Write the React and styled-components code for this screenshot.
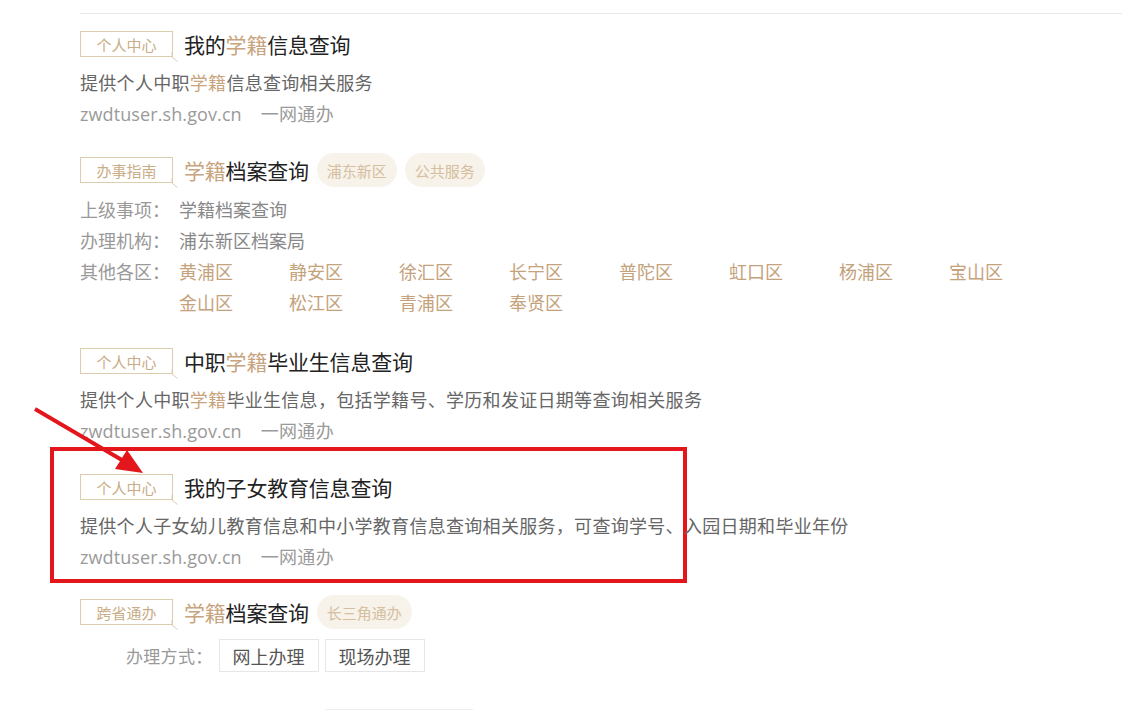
import styled, { createGlobalStyle } from "styled-components";

const GlobalStyle = createGlobalStyle`
  html, body {
    margin: 0;
    padding: 0;
    background: #fff;
  }
  body {
    font-family: "Noto Sans", "Noto Sans CJK SC", sans-serif;
    color: #333;
  }
`;

const Page = styled.div`
  width: 1122px;
  height: 712px;
  overflow: hidden;
  padding-top: 13px;
  box-sizing: border-box;
  position: relative;
`;

const Divider = styled.div`
  margin-left: 80px;
  height: 1px;
  background: #e8e8e8;
`;

const List = styled.div`
  display: flex;
  flex-direction: column;
  padding: 12px 0 0 80px;
`;

const Item = styled.div`
  display: flex;
  flex-direction: column;
  position: relative;
  margin-top: ${(p) => p.$gap || 0}px;
`;

const Header = styled.div`
  display: flex;
  align-items: center;
  height: 36px;
  margin-bottom: 5px;
`;

const Tag = styled.span`
  position: relative;
  box-sizing: border-box;
  width: 93px;
  height: 26px;
  border: 1px solid #dccdaf;
  color: #c9ad88;
  font-size: 15px;
  font-family: "Noto Sans CJK SC", sans-serif;
  display: flex;
  align-items: center;
  justify-content: center;
  flex-shrink: 0;
  margin-right: 11px;
`;

const TailSvg = styled.svg`
  position: absolute;
  right: -7px;
  bottom: -6px;
`;

const Tail = () => (
  <TailSvg width="8" height="10" viewBox="0 0 8 10">
    <path d="M1 0 V5 L6.5 9.5" fill="none" stroke="#dccdaf" strokeWidth="1" />
  </TailSvg>
);

const Title = styled.h3`
  margin: 0;
  font-size: 21px;
  font-weight: 400;
  color: #222;
  font-family: "Noto Sans CJK SC", sans-serif;
  letter-spacing: -0.2px;
`;

const Hl = styled.span`
  color: #c8a47e;
`;

const Chip = styled.span`
  height: 34px;
  padding: 0 10px;
  border-radius: 17px;
  background: #f7f2ea;
  color: #d5bf9e;
  font-size: 15px;
  font-family: "Noto Sans CJK SC", sans-serif;
  display: flex;
  align-items: center;
  margin-left: 8px;
  &:first-of-type {
    margin-left: 7px;
  }
`;

const Line = styled.div`
  font-size: 18px;
  line-height: 31px;
  letter-spacing: 0.3px;
  color: ${(p) => (p.$muted ? "#9a9a9a" : "#666")};
  white-space: nowrap;
  font-family: "Noto Sans CJK SC", sans-serif;
`;

const Url = styled.span`
  font-family: "Open Sans", "Noto Sans CJK SC", sans-serif;
  letter-spacing: 0.1px;
  margin-right: 19px;
`;

const Fields = styled.div`
  margin-top: 1px;
  display: flex;
  flex-direction: column;
`;

const Field = styled.div`
  display: flex;
  font-size: 18px;
  line-height: 31px;
  font-family: "Noto Sans CJK SC", sans-serif;
`;

const Label = styled.span`
  width: 99px;
  flex-shrink: 0;
  color: #999;
`;

const Value = styled.span`
  color: #888;
`;

const Districts = styled.div`
  display: grid;
  grid-template-columns: repeat(8, 110px);
`;

const District = styled.span`
  color: #c4a27c;
`;

const MethodRow = styled.div`
  display: flex;
  align-items: center;
  gap: 6px;
  margin-top: 4px;
  padding-left: 46px;
  font-family: "Noto Sans CJK SC", sans-serif;
`;

const MethodLabel = styled.span`
  font-size: 17px;
  letter-spacing: 0.3px;
  color: #999;
  margin-right: 0;
`;

const MethodBtn = styled.span`
  box-sizing: border-box;
  width: 100px;
  height: 33px;
  border: 1px solid #e6e6e6;
  display: flex;
  align-items: center;
  justify-content: center;
  font-size: 18px;
  color: #555;
`;

const Highlight = styled.div`
  position: relative;
  margin-top: ${(p) => p.$gap || 0}px;
  &::before {
    content: "";
    position: absolute;
    left: -30px;
    top: -22px;
    width: 637px;
    height: 136px;
    box-sizing: border-box;
    border: 4px solid #e3161c;
    pointer-events: none;
  }
`;

const ArrowSvg = styled.svg`
  position: absolute;
  left: 0;
  top: 0;
  pointer-events: none;
`;

const Pager = styled.div`
  margin: 37px 0 0 325px;
  width: 148px;
  height: 30px;
  border-top: 1px solid #eee;
`;

const Arrow = () => (
  <ArrowSvg width="200" height="500" viewBox="0 0 200 500">
    <line x1="35" y1="409" x2="127" y2="463" stroke="#e3161c" strokeWidth="3.8" />
    <path d="M143 473 L115 469 L127 450 Z" fill="#e3161c" />
  </ArrowSvg>
);

const districts = [
  "黄浦区", "静安区", "徐汇区", "长宁区", "普陀区", "虹口区", "杨浦区", "宝山区",
  "金山区", "松江区", "青浦区", "奉贤区",
];

function Source() {
  return (
    <Line $muted>
      <Url>zwdtuser.sh.gov.cn</Url>一网通办
    </Line>
  );
}

export default function App() {
  return (
    <>
      <GlobalStyle />
      <Page>
        <Divider />
        <List>
          <Item>
            <Header>
              <Tag>个人中心<Tail /></Tag>
              <Title>我的<Hl>学籍</Hl>信息查询</Title>
            </Header>
            <Line>提供个人中职<Hl>学籍</Hl>信息查询相关服务</Line>
            <Source />
          </Item>

          <Item $gap={22}>
            <Header>
              <Tag>办事指南<Tail /></Tag>
              <Title><Hl>学籍</Hl>档案查询</Title>
              <Chip>浦东新区</Chip>
              <Chip>公共服务</Chip>
            </Header>
            <Fields>
              <Field>
                <Label>上级事项：</Label>
                <Value>学籍档案查询</Value>
              </Field>
              <Field>
                <Label>办理机构：</Label>
                <Value>浦东新区档案局</Value>
              </Field>
              <Field>
                <Label>其他各区：</Label>
                <Districts>
                  {districts.map((d) => (
                    <District key={d}>{d}</District>
                  ))}
                </Districts>
              </Field>
            </Fields>
          </Item>

          <Item $gap={25}>
            <Header>
              <Tag>个人中心<Tail /></Tag>
              <Title>中职<Hl>学籍</Hl>毕业生信息查询</Title>
            </Header>
            <Line>提供个人中职<Hl>学籍</Hl>毕业生信息，包括学籍号、学历和发证日期等查询相关服务</Line>
            <Source />
          </Item>

          <Highlight $gap={22}>
            <Item>
              <Header>
                <Tag>个人中心<Tail /></Tag>
                <Title>我的子女教育信息查询</Title>
              </Header>
              <Line>提供个人子女幼儿教育信息和中小学教育信息查询相关服务，可查询学号、入园日期和毕业年份</Line>
              <Source />
            </Item>
          </Highlight>

          <Item $gap={21}>
            <Header>
              <Tag>跨省通办<Tail /></Tag>
              <Title><Hl>学籍</Hl>档案查询</Title>
              <Chip>长三角通办</Chip>
            </Header>
            <MethodRow>
              <MethodLabel>办理方式：</MethodLabel>
              <MethodBtn>网上办理</MethodBtn>
              <MethodBtn>现场办理</MethodBtn>
            </MethodRow>
          </Item>
        </List>
        <Pager />
        <Arrow />
      </Page>
    </>
  );
}
